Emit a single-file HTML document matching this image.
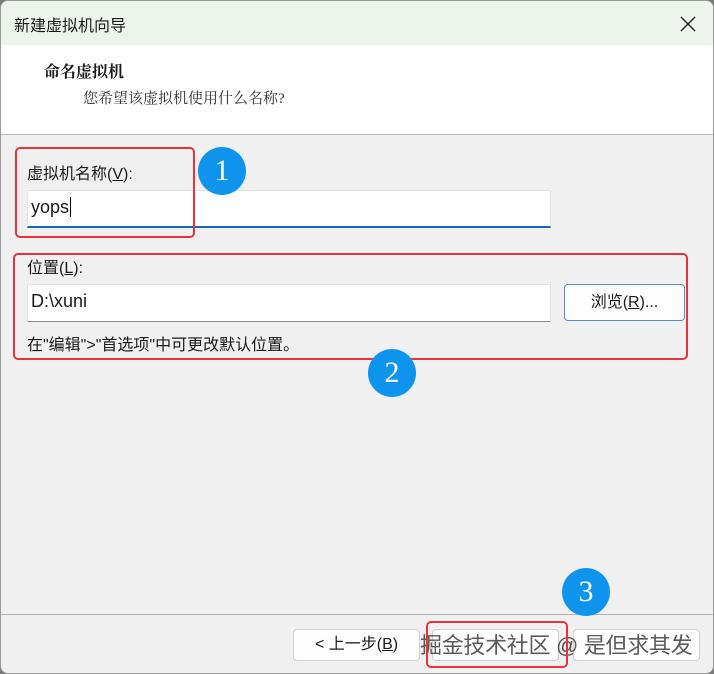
<!DOCTYPE html>
<html><head><meta charset="utf-8"><style>
*{margin:0;padding:0;box-sizing:border-box}
body{width:714px;height:674px;background:#7a7a7a;position:relative;overflow:hidden;font-family:"Liberation Sans","Noto Sans CJK SC",sans-serif;color:#1a1a1a}
.win{position:absolute;left:0;top:0;width:714px;height:674px;background:#f0f0f0;border:1px solid #9a9a9a;border-radius:8px;overflow:hidden}
.tb{position:absolute;left:0;top:0;width:714px;height:44px;background:#edf4ec;font-size:16px}
.hd{position:absolute;left:0;top:44px;width:714px;height:90px;background:#fff;border-bottom:1px solid #b8b8b8}
.a{position:absolute;white-space:nowrap}
.inp{position:absolute;background:#fff;border:1px solid #e2e2e2;border-bottom:1px solid #8a8a8a}
.btn{position:absolute;background:#fdfdfd;border:1px solid #d0d0d0;border-radius:4px;font-size:16px;text-align:center;line-height:30px}
.red{position:absolute;border:2.5px solid #e8333b;border-radius:5px}
.c{position:absolute;width:48px;height:48px;border-radius:50%;background:#0f94ee;color:#fff;font-family:"Liberation Serif",serif;font-size:30px;text-align:center;line-height:48px}
u{text-decoration:underline}
</style></head><body><div class="win">
<div class="tb"><div class="a" style="left:13px;top:11px">新建虚拟机向导</div>
<svg class="a" style="left:679px;top:15px" width="16" height="16"><path d="M1 1L15 15M15 1L1 15" stroke="#222" stroke-width="1.4"/></svg></div>
<div class="hd"><div class="a" style="left:43px;top:14px;font-size:16px;font-weight:bold;font-family:'Liberation Serif','Noto Serif CJK SC',serif">命名虚拟机</div>
<div class="a" style="left:82px;top:42px;font-size:15px;font-family:'Liberation Serif','Noto Serif CJK SC',serif;color:#333">您希望该虚拟机使用什么名称?</div></div>
<div class="a" style="left:26px;top:159px;font-size:16px">虚拟机名称(<u>V</u>):</div>
<div class="inp" style="left:26px;top:189px;width:524px;height:38px;border-bottom:2px solid #1a66b0"><span class="a" style="left:3px;top:6px;font-size:18px">yops<span style="border-left:1px solid #000;margin-left:1px"></span></span></div>
<div class="a" style="left:26px;top:253px;font-size:16px">位置(<u>L</u>):</div>
<div class="inp" style="left:26px;top:283px;width:524px;height:38px"><span class="a" style="left:3px;top:6px;font-size:18px">D:\xuni</span></div>
<div class="btn" style="left:563px;top:283px;width:121px;height:37px;line-height:35px;border-color:#5b8cc7">浏览(<u>R</u>)...</div>
<div class="a" style="left:26px;top:330px;font-size:16px">在"编辑"&gt;"首选项"中可更改默认位置。</div>
<div style="position:absolute;left:0;top:613px;width:714px;border-top:1px solid #b0b0b0"></div>
<div class="btn" style="left:292px;top:628px;width:127px;height:32px">&lt; 上一步(<u>B</u>)</div>
<div class="btn" style="left:431px;top:628px;width:127px;height:32px;color:#999"></div>
<div class="btn" style="left:572px;top:628px;width:127px;height:32px"></div>
<div class="a" style="left:419px;top:627px;font-size:22px;letter-spacing:-0.3px;color:rgba(50,50,50,.8)">掘金技术社区 @ 是但求其发</div>
<div class="red" style="left:14px;top:146px;width:180px;height:91px"></div>
<div class="red" style="left:12px;top:252px;width:675px;height:107px"></div>
<div class="red" style="left:425px;top:620px;width:142px;height:47px"></div>
<div class="c" style="left:197px;top:146px">1</div>
<div class="c" style="left:367px;top:348px">2</div>
<div class="c" style="left:561px;top:567px">3</div>
</div></body></html>
